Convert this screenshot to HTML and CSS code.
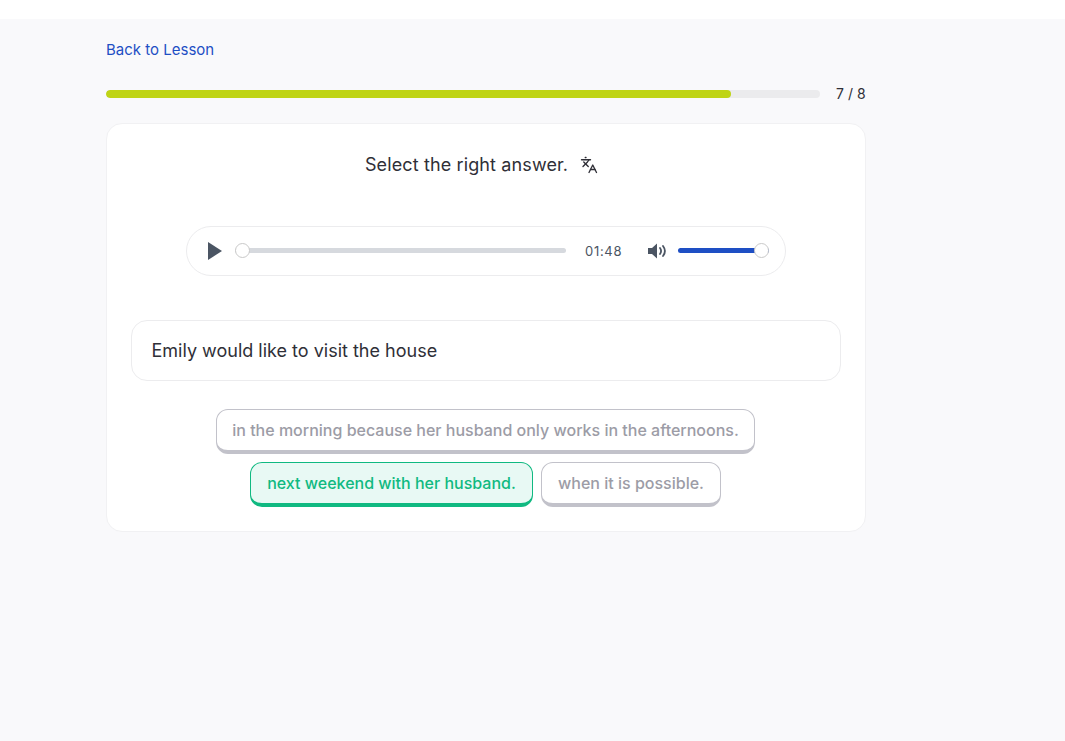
FILE: index.html
```html
<!DOCTYPE html>
<html lang="en">
<head>
<meta charset="utf-8">
<title>Lesson</title>
<link rel="stylesheet" href="styles.css">
</head>
<body>
<div class="topbar"></div>
<main class="page">
  <a class="back" href="#">Back to Lesson</a>
  <div class="progress">
    <div class="track"><div class="fill"></div></div>
    <span class="count">7 / 8</span>
  </div>
  <section class="card">
    <div class="title">
      <span>Select the right answer.</span>
      <svg class="translate" viewBox="0 0 24 24" width="18" height="18" fill="none" stroke="#2f2f37" stroke-width="1.8" stroke-linecap="round" stroke-linejoin="round">
        <path d="M5 8l6 6"/><path d="M4 14l6-6 2-3"/><path d="M2 5h12"/><path d="M7 2h1"/><path d="M22 22l-5-10-5 10"/><path d="M14 18h6"/>
      </svg>
    </div>
    <div class="player">
      <svg class="play" viewBox="0 0 16 18" width="16" height="18"><path d="M1 0L15 9 1 18z" fill="#4b5563"/></svg>
      <div class="seek"><span class="knob"></span></div>
      <span class="time">01:48</span>
      <svg class="speaker" viewBox="0 0 20 16" width="20" height="16" fill="none"><path d="M0 5h4l5-4.500v15L4 11H0z" fill="#4b5563"/><path d="M12 5c1.300 1.800 1.300 4.200 0 6M15 3c2.300 3 2.300 7 0 10" stroke="#4b5563" stroke-width="1.800" stroke-linecap="round"/></svg>
      <div class="volume"><span class="knob"></span></div>
    </div>
    <div class="sentence">Emily would like to visit the house</div>
    <div class="options">
      <button class="option long" type="button">in the morning because her husband only works in the afternoons.</button>
      <button class="option selected" type="button">next weekend with her husband.</button>
      <button class="option short" type="button">when it is possible.</button>
    </div>
  </section>
</main>
</body>
</html>
```
FILE: styles.css
```css
* { box-sizing: border-box; }
html, body { height: 100%; }
body {
  margin: 0;
  display: flex;
  flex-direction: column;
  background: #f9f9fb;
  font-family: Inter, "Liberation Sans", sans-serif;
  color: #2f2f37;
}
.topbar { height: 19px; background: #fff; flex: none; }
.page {
  width: 760px;
  margin-left: 106px;
  padding-top: 21px;
}
.back {
  display: block;
  font-size: 15px;
  line-height: 20px;
  color: #1e4fc4;
  text-decoration: none;
}
.progress {
  display: flex;
  align-items: center;
  gap: 16px;
  margin-top: 24px;
  height: 20px;
}
.track {
  flex: 1;
  height: 8px;
  border-radius: 4px;
  background: #ebebed;
  overflow: hidden;
}
.fill {
  width: 87.5%;
  height: 100%;
  border-radius: 4px;
  background: #bfd415;
}
.count {
  flex: none;
  width: 30px;
  font-size: 14px;
  line-height: 20px;
  letter-spacing: .05px;
  white-space: nowrap;
}
.card {
  margin-top: 19px;
  padding: 24px;
  background: #fff;
  border: 1px solid #f1f1f3;
  border-radius: 16px;
}
.title {
  display: flex;
  justify-content: center;
  align-items: center;
  gap: 12px;
  font-size: 18px;
  letter-spacing: .125px;
  line-height: 28px;
  margin-top: 3px;
}
.translate { flex: none; margin-right: 9px; }
.player {
  width: 600px;
  height: 50px;
  margin: 47px auto 0;
  padding: 0 16px 0 20px;
  display: flex;
  align-items: center;
  background: #fff;
  border: 1px solid #ececee;
  border-radius: 25px;
}
.play { flex: none; margin-right: 12px; }
.seek {
  position: relative;
  width: 331px;
  height: 5px;
  margin-bottom: 1px;
  background: #d6d9de;
  border-radius: 3px;
}
.knob {
  position: absolute;
  top: 50%;
  width: 15px;
  height: 15px;
  margin-top: -7.5px;
  background: #fff;
  border: 1px solid #c9c9c9;
  border-radius: 50%;
}
.seek .knob { left: 0; }
.time {
  margin: 0 26px 1px 19px;
  font-size: 13px;
  letter-spacing: .7px;
  color: #4b5563;
}
.speaker { flex: none; margin-right: 10px; }
.volume {
  position: relative;
  flex: 1;
  height: 5px;
  margin-bottom: 1px;
  background: #1e4fc4;
  border-radius: 3px;
}
.volume .knob { right: 0; }
.sentence {
  margin-top: 44px;
  height: 61px;
  padding: 0 19.5px;
  display: flex;
  align-items: center;
  font-size: 18px;
  background: #fff;
  border: 1px solid #ececee;
  border-radius: 16px;
}
.options {
  margin-top: 28px;
  padding-right: 1px;
  display: flex;
  flex-wrap: wrap;
  justify-content: center;
  gap: 8px;
}
.option {
  height: 45px;
  padding: 0;
  white-space: nowrap;
  font: 500 16px/24px Inter, "Liberation Sans", sans-serif;
  color: #9c9ca6;
  background: #fff;
  border: 1px solid #c2c2ca;
  border-bottom-width: 4px;
  border-radius: 12px;
}
.option.long { width: 539px; }
.option.short { width: 180px; }
.option.selected {
  width: 283px;
  color: #10b981;
  background: #e8f9f4;
  border-color: #10b981;
}
```
